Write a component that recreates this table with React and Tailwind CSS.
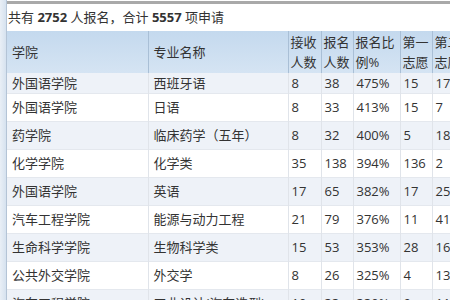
import React from 'react'

const rows = [
    ['外国语学院', '西班牙语', '8', '38', '475%', '15', '17'],
    ['外国语学院', '日语', '8', '33', '413%', '15', '7'],
    ['药学院', '临床药学（五年）', '8', '32', '400%', '5', '18'],
    ['化学学院', '化学类', '35', '138', '394%', '136', '2'],
    ['外国语学院', '英语', '17', '65', '382%', '17', '25'],
    ['汽车工程学院', '能源与动力工程', '21', '79', '376%', '11', '41'],
    ['生命科学学院', '生物科学类', '15', '53', '353%', '28', '16'],
    ['公共外交学院', '外交学', '8', '26', '325%', '4', '13'],
    ['汽车工程学院', '工业设计(汽车造型)', '10', '33', '330%', '9', '11'],
]

const headers = [
    ['学院'], ['专业名称'], ['接收', '人数'], ['报名', '人数'], ['报名比', '例%'], ['第一', '志愿'], ['第二', '志愿'],
]

const App = () => {
    return (
        <div className="w-[450px] h-[300px] overflow-hidden bg-white flex text-[13px] text-[#333] font-['Open_Sans','Noto_Sans_CJK_SC',sans-serif]">
            <div className="w-[7px] shrink-0 bg-gradient-to-r from-[#e9eff6] to-[#d6e2ef] border-r border-[#b4c4d6]"></div>
            <div className="flex-1 flex flex-col min-w-0">
                <div className="h-[3px] mt-[1px] shrink-0 bg-[#a9a9a9]"></div>
                <div className="h-[27px] shrink-0 pl-[1px] flex items-center whitespace-nowrap">
                    共有&nbsp;<b>2752</b>&nbsp;人报名，合计&nbsp;<b>5557</b>&nbsp;项申请
                </div>
                <table className="shrink-0 table-fixed border-collapse w-[470px]">
                    <colgroup>
                        <col className="w-[141px]" />
                        <col className="w-[140px]" />
                        <col className="w-[33px]" />
                        <col className="w-[32px]" />
                        <col className="w-[47px]" />
                        <col className="w-[32px]" />
                        <col className="w-[45px]" />
                    </colgroup>
                    <thead>
                        <tr className="h-[42px] bg-gradient-to-b from-[#c4d9ee] to-[#d5e4f3]">
                            {headers.map((h, i) => (
                                <th key={i} className={`font-normal text-left align-middle leading-[20px] border-r border-[#a9bfd6] whitespace-nowrap ${i < 2 ? 'pl-[5px]' : 'pl-[2px]'}`}>
                                    {h.map((line, j) => <div key={j}>{line}</div>)}
                                </th>
                            ))}
                        </tr>
                    </thead>
                    <tbody>
                        {rows.map((r, i) => (
                            <tr key={i} className={`${i === 0 ? 'h-[20px]' : 'h-[28px]'} ${i % 2 === 0 ? 'bg-[#eef2f8]' : 'bg-white'} border-b border-[#e4e8ee]`}>
                                {r.map((c, j) => (
                                    <td key={j} className={`align-middle leading-[16px] border-r border-[#e0e4ea] whitespace-nowrap overflow-hidden ${j < 2 ? 'pl-[5px]' : 'pl-[3px]'}`}>
                                        {c}
                                    </td>
                                ))}
                            </tr>
                        ))}
                    </tbody>
                </table>
            </div>
        </div>
    )
}

export default App
